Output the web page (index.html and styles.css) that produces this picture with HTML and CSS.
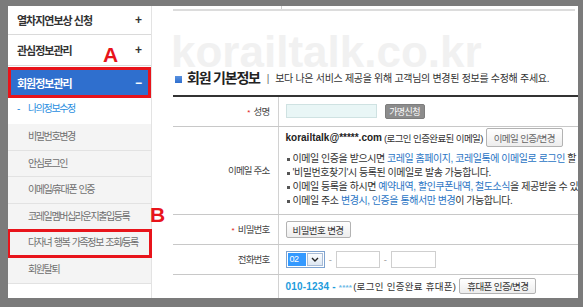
FILE: index.html
```html
<!doctype html>
<html>
<head>
<meta charset="utf-8">
<title>회원정보관리</title>
<link rel="stylesheet" href="styles.css">
</head>
<body>
<div class="frame">
	<ul class="side">
		<li class="menu first"><span>열차지연보상 신청</span><b>+</b></li>
		<li class="menu"><span>관심정보관리</span><b>+</b></li>
		<li class="menu on"><span>회원정보관리</span><b>&minus;</b></li>
		<li class="sub cur"><span class="bar">-</span>나의정보수정</li>
		<li class="sub">비밀번호변경</li>
		<li class="sub">안심로그인</li>
		<li class="sub">이메일/휴대폰 인증</li>
		<li class="sub">코레일멤버십라운지출입등록</li>
		<li class="sub marked">다자녀 행복 가족정보 조회/등록</li>
		<li class="sub">회원탈퇴</li>
	</ul>

	<div class="content">
		<div class="tabs"><span class="tab"></span><span class="tab-rest"></span></div>
		<p class="watermark">korailtalk.co.kr</p>
		<h2 class="title"><i></i>회원 기본정보<em>|</em><span>보다 나은 서비스 제공을 위해 고객님의 변경된 정보를 수정해 주세요.</span></h2>

		<table class="info">
			<tr class="r-name">
				<th><span class="req">*</span>성명</th>
				<td><div class="line"><input type="text" class="in-name"><button class="btn btn-gray">가명신청</button></div></td>
			</tr>
			<tr class="r-mail">
				<th>이메일 주소</th>
				<td class="top">
					<div class="line mail"><strong>korailtalk@*****.com</strong>&nbsp;(로그인 인증완료된 이메일)<button class="btn btn-mail">이메일 인증/변경</button></div>
					<ul class="notes">
						<li>이메일 인증을 받으시면 <a>코레일 홈페이지, 코레일톡에 이메일로 로그인</a> 할 수 있습니다.</li>
						<li>'비밀번호찾기'시 등록된 이메일로 발송 가능합니다.</li>
						<li>이메일 등록을 하시면 <a>예약내역, 할인쿠폰내역, 철도소식</a>을 제공받을 수 있습니다.</li>
						<li>이메일 주소 <a>변경시, 인증을 통해서만 변경</a>이 가능합니다.</li>
					</ul>
				</td>
			</tr>
			<tr class="r-pw">
				<th><span class="req">*</span>비밀번호</th>
				<td><button class="btn btn-pw">비밀번호 변경</button></td>
			</tr>
			<tr class="r-tel">
				<th>전화번호</th>
				<td>
					<div class="line">
						<span class="sel"><span class="sel-val">02</span><span class="sel-arrow"><svg width="8" height="5" viewBox="0 0 8 5"><path d="M1 1 L4 4 L7 1" fill="none" stroke="#222" stroke-width="1.4"/></svg></span></span>
						<span class="dash">-</span><input type="text" class="in-tel">
						<span class="dash">-</span><input type="text" class="in-tel">
					</div>
				</td>
			</tr>
			<tr class="r-phone">
				<th></th>
				<td class="top">
					<div class="line phone-line"><strong class="phone">010-1234 - <span>****</span></strong>(로그인 인증완료 휴대폰)<button class="btn btn-phone">휴대폰 인증/변경</button></div>
					<ul class="notes">
						<li>휴대폰 번호를 등록하시면 코레일 홈페이지, 코레일톡에 휴대폰번호로 로그인 할 수 있습니다.</li>
					</ul>
				</td>
			</tr>
		</table>
	</div>

	<span class="mark mark-a">A</span>
	<span class="mark mark-b">B</span>
</div>
</body>
</html>
```

FILE: styles.css
```css
*{ margin:0; padding:0; list-style:none; box-sizing:border-box;}
body{ background:#7b7b7b; height:307px; overflow:hidden; font-family:"Liberation Sans","Noto Sans CJK KR",sans-serif; color:#333;}

.frame{ position:relative; display:flex; align-items:flex-start; margin:6px 5px 0 8px; height:292px; background:#fff; overflow:hidden;}

/* left menu */
.side{ width:144px; flex:none; height:292px; border-right:1px solid #e3e3e3;}
.menu{ display:flex; justify-content:space-between; align-items:center; height:31px; padding:0 9px 0 9px; border-bottom:1px solid #dadada; font-size:11px; font-weight:bold; letter-spacing:-1px; color:#333;}
.menu.first{ height:29px;}
.menu b{ font-size:12px; letter-spacing:0;}
.menu.on{ height:31px; margin-top:1px; border-bottom:0; background:#2f6fce; color:#fff; outline:3px solid #e8141b; outline-offset:-3px;}
.sub{ height:26.6px; line-height:25.6px; padding-left:20px; background:#f4f4f4; border-bottom:1px solid #e2e2e2; font-size:10px; letter-spacing:-1.4px; word-spacing:1px; color:#6f6f6f; white-space:nowrap;}
.sub.cur{ height:26px; line-height:22px; padding-left:9px; background:#fff; border-bottom:0; color:#2a8ee0;}
.sub .bar{ display:inline-block; width:11px; letter-spacing:0;}
.sub.marked{ outline:3px solid #e8141b; outline-offset:-2px;}

/* content */
.content{ position:relative; z-index:0; flex:1; min-width:0; margin-left:21px;}
.tabs{ display:flex; height:5px; margin-right:3px; border-bottom:2px solid #dcdcdc;}
.tab{ width:109px; border-right:1px solid #cfcfcf;}
.watermark{ position:absolute; z-index:-1; left:-2px; top:31px; font-size:44px; line-height:30px; font-weight:bold; color:#f1f1f1; white-space:nowrap;}

.title{ display:flex; align-items:center; height:20px; margin-top:56px; font-size:14px; letter-spacing:-1.2px; color:#222; white-space:nowrap;}
.title i{ width:7px; height:7px; margin:5px 5px 0 2px; background:linear-gradient(#5a92e0,#2f6fce);}
.title em{ font-style:normal; font-weight:normal; font-size:10px; color:#666; margin:3px 7px 0 7px;}
.title span{ font-size:10px; font-weight:normal; letter-spacing:-0.3px; color:#333;}

.info{ width:405px; margin-top:8px; table-layout:fixed; border-collapse:collapse; border-top:2px solid #333;}
.info th{ width:105px; padding-right:8px; border-right:1px solid #d2d2d2; border-bottom:1px solid #c8c8c8; text-align:right; font-weight:normal; font-size:9.5px; letter-spacing:-0.8px; color:#444;}
.info td{ padding-left:7px; border-bottom:1px solid #c8c8c8; font-size:9.5px; letter-spacing:-0.6px; white-space:nowrap; vertical-align:middle;}
.info td.top{ vertical-align:top;}
.r-name th,.r-name td{ height:30px;}
.r-mail th,.r-mail td{ height:88px;}
.r-pw th,.r-pw td,.r-tel th,.r-tel td{ height:30px;}
.r-phone th,.r-phone td{ height:40px; border-bottom:0;}
.req{ color:#e02020; font-size:8px; margin-right:4px;}

.line{ display:flex; align-items:center;}
.mail{ height:20px; margin-top:1px;}
.mail strong{ font-size:10px; letter-spacing:0; color:#222;}
.notes{ margin-top:4px;}
.notes li{ position:relative; height:14px; line-height:14px; padding-left:7px; font-size:10px; letter-spacing:-0.45px; color:#333;}
.notes li:before{ content:""; position:absolute; left:1px; top:6px; width:3px; height:3px; background:#555;}
.notes a{ color:#2a74c4;}

input{ font:inherit; outline:none;}
.in-name{ width:91px; height:14px; background:#e9f6f6; border:1px solid #cfe2e2;}
.btn{ font:inherit; height:17px; padding:0 5px; border:1px solid #b3b3b3; border-radius:2px; background:linear-gradient(#fff,#ededed); color:#444; font-size:9.5px; letter-spacing:-0.6px;}
.btn-gray{ height:15px; width:40px; padding:0; margin-left:8px; background:#8c8c8c; border-color:#7d7d7d; color:#fff; font-size:9px;}
.btn-mail{ width:77px; height:19px; margin-left:3px; color:#666;}
.btn-pw{ width:65px; margin-top:1px; color:#333;}
.btn-phone{ width:77px; height:16px; margin-left:3px; color:#333;}

.sel{ display:inline-flex; width:39px; height:17px; padding:1px; gap:1px; border:1px solid #7ea3d0;}
.sel-val{ flex:1; padding-left:2px; background:#3399ff; color:#fff; font-size:9px; line-height:13px;}
.sel-arrow{ display:flex; align-items:center; justify-content:center; width:16px; border:1px solid #a9bcd6; background:linear-gradient(#fbfdff,#dde7f2);}
.dash{ width:11px; text-align:center; color:#999;}
.in-tel{ width:44px; height:17px; border:1px solid #cfcfcf;}
.in-tel:last-child{ width:45px;}

.phone-line{ height:17px; margin-top:3px; letter-spacing:0.3px;}
.phone{ font-size:10px; letter-spacing:0.2px; color:#1d9bdc; margin-right:1px;}
.phone span{ font-size:8px; color:#6bb9e6;}
.phone-line .btn{ letter-spacing:-0.6px;}
.r-phone .notes{ margin-top:4px;}

/* annotation marks */
.mark{ position:absolute; font-size:21px; line-height:21px; font-weight:bold; color:#e8141b;}
.mark-a{ left:95px; top:38px;}
.mark-b{ left:142px; top:198px;}
```
